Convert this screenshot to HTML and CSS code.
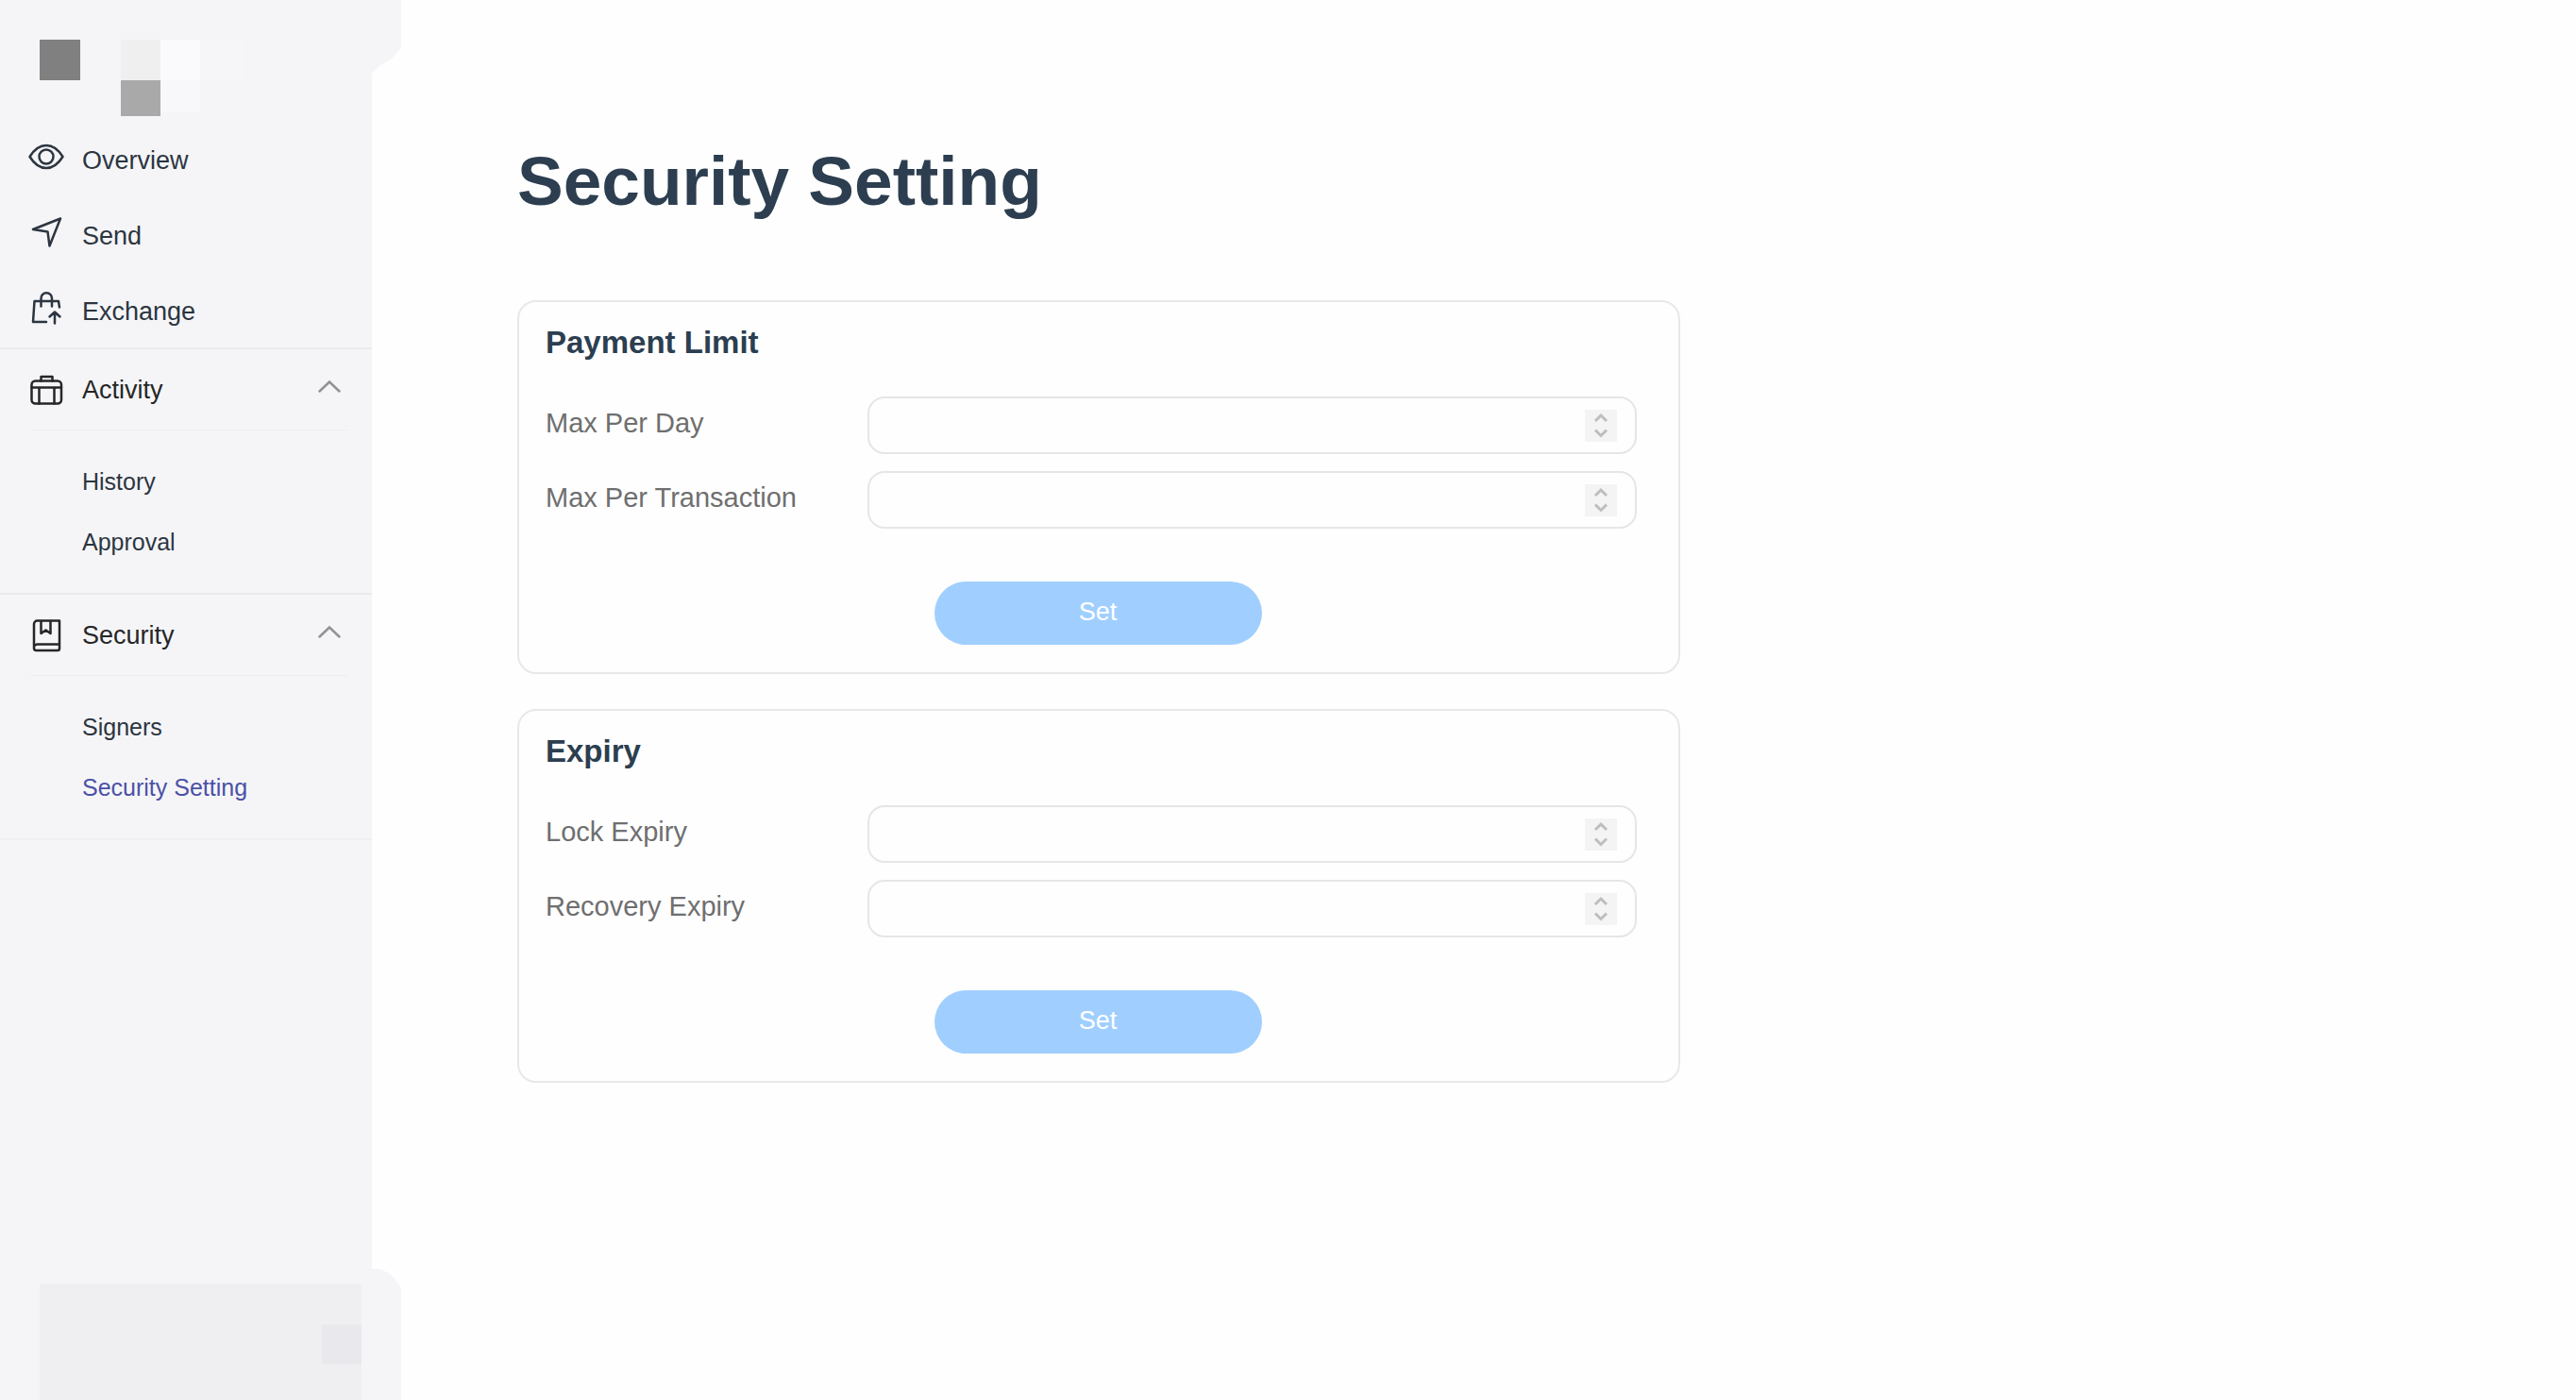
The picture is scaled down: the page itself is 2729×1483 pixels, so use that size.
FILE: index.html
```html
<!DOCTYPE html>
<html lang="en">
<head>
<meta charset="utf-8">
<meta name="viewport" content="width=device-width, initial-scale=1">
<title>Security Setting</title>
<link rel="stylesheet" href="styles.css">
</head>
<body>
<div class="layout">
  <aside class="sidebar">
    <div class="brand">
      <svg class="brand-logo" width="256" height="131" viewBox="0 0 256 131" aria-hidden="true">
        <rect x="42" y="42" width="43" height="43" fill="#808080"/>
        <rect x="128" y="42" width="42" height="43" fill="#efeff0"/>
        <rect x="170" y="42" width="42" height="43" fill="#fafafc"/>
        <rect x="212" y="42" width="44" height="43" fill="#f6f6f8"/>
        <rect x="128" y="85" width="42" height="38" fill="#a9a9aa"/>
        <rect x="170" y="85" width="42" height="34" fill="#f8f8fa"/>
      </svg>
    </div>
    <nav class="nav">
      <ul class="nav-main">
        <li><a class="nav-link" href="#">
          <svg class="icon icon-raised" viewBox="0 0 40 40" aria-hidden="true"><path d="M2.500 20C7.500 12 13.500 8 20 8s12.500 4 17.500 12C32.500 28 26.500 32 20 32S7.500 28 2.500 20z"/><circle cx="20" cy="20" r="7.500"/></svg>
          <span>Overview</span></a></li>
        <li><a class="nav-link" href="#">
          <svg class="icon icon-raised" viewBox="0 0 40 40" aria-hidden="true"><path d="M35 5.500 6 17l15.500 2.500 2 15z"/></svg>
          <span>Send</span></a></li>
        <li><a class="nav-link" href="#">
          <svg class="icon icon-raised" viewBox="0 0 40 40" aria-hidden="true"><path d="M20 35H6L7.500 13H33l1 6.500M14.500 18.500V10a5.750 5.750 0 0 1 11.500 0v8.500M29 36.500V25M23.500 29.500 29 24.500l5.500 5"/></svg>
          <span>Exchange</span></a></li>
      </ul>
      <section class="group">
        <button class="group-toggle" type="button" aria-expanded="true">
          <svg class="icon" viewBox="0 0 40 40" aria-hidden="true"><rect x="4.500" y="10.500" width="31.500" height="24" rx="4"/><path d="M4.500 17.500H36M12.500 17.500v17M28.500 17.500v17M14.500 10.500V6H26.500v4.500"/></svg>
          <span>Activity</span>
          <svg class="chevron" viewBox="0 0 24 14" aria-hidden="true"><path d="M1.500 12.500 12 2.500l10.500 10"/></svg>
        </button>
        <ul class="group-list">
          <li><a class="sub-link" href="#">History</a></li>
          <li><a class="sub-link" href="#">Approval</a></li>
        </ul>
      </section>
      <section class="group">
        <button class="group-toggle" type="button" aria-expanded="true">
          <svg class="icon" viewBox="0 0 40 40" aria-hidden="true"><path d="M7 33.500V8a3.500 3.500 0 0 1 3.500-3.500H34V34a2 2 0 0 1-2 2H9.500A2.500 2.500 0 0 1 7 33.500 3.500 3.500 0 0 1 10.500 29.500H34M14.500 4.500V18l5-3.500 5 3.500V4.500"/></svg>
          <span>Security</span>
          <svg class="chevron" viewBox="0 0 24 14" aria-hidden="true"><path d="M1.500 12.500 12 2.500l10.500 10"/></svg>
        </button>
        <ul class="group-list">
          <li><a class="sub-link" href="#">Signers</a></li>
          <li><a class="sub-link active" href="#" aria-current="page">Security Setting</a></li>
        </ul>
      </section>
    </nav>
    <div class="account">
      <div class="account-panel"><span class="account-badge"></span></div>
    </div>
  </aside>

  <main class="content">
    <h1 class="title">Security Setting</h1>
    <form class="card">
      <h2 class="card-title">Payment Limit</h2>
      <div class="row">
        <label class="label" for="max-day">Max Per Day</label>
        <div class="field"><input class="input" id="max-day" type="number">
          <svg class="spinner" viewBox="0 0 34 34" aria-hidden="true"><path d="M11 12l6-6 6 6M11 21.500l6 6 6-6"/></svg></div>
      </div>
      <div class="row">
        <label class="label" for="max-transaction">Max Per Transaction</label>
        <div class="field"><input class="input" id="max-transaction" type="number">
          <svg class="spinner" viewBox="0 0 34 34" aria-hidden="true"><path d="M11 12l6-6 6 6M11 21.500l6 6 6-6"/></svg></div>
      </div>
      <button class="submit" type="button">Set</button>
    </form>
    <form class="card">
      <h2 class="card-title">Expiry</h2>
      <div class="row">
        <label class="label" for="lock-expiry">Lock Expiry</label>
        <div class="field"><input class="input" id="lock-expiry" type="number">
          <svg class="spinner" viewBox="0 0 34 34" aria-hidden="true"><path d="M11 12l6-6 6 6M11 21.500l6 6 6-6"/></svg></div>
      </div>
      <div class="row">
        <label class="label" for="recovery-expiry">Recovery Expiry</label>
        <div class="field"><input class="input" id="recovery-expiry" type="number">
          <svg class="spinner" viewBox="0 0 34 34" aria-hidden="true"><path d="M11 12l6-6 6 6M11 21.500l6 6 6-6"/></svg></div>
      </div>
      <button class="submit" type="button">Set</button>
    </form>
  </main>
</div>
</body>
</html>
```
FILE: styles.css
```css
* {
  box-sizing: border-box;
}

body {
  margin: 0;
  background: #fefefe;
  color: #2c3e50;
  font-family: "Liberation Sans", Arial, Helvetica, sans-serif;
}

button,
input {
  font-family: inherit;
}

ul {
  list-style: none;
  margin: 0;
  padding: 0;
}

a {
  text-decoration: none;
}

.layout {
  display: grid;
  grid-template-columns: 394px minmax(0, 1fr);
  min-height: 100vh;
}

/* Sidebar */

.sidebar {
  display: flex;
  flex-direction: column;
  background: #f5f5f8;
}

/* The top and bottom parts reach past the sidebar edge. */
.brand,
.account {
  margin-right: -31px;
  background: #f5f5f8;
}

.brand {
  height: 132px;
  clip-path: polygon(0 0, 100% 0, 100% 51px, 415px 62px, 402px 70px, 394px 78px, 394px 100%, 0 100%);
}

.brand-logo {
  display: block;
}

.nav-main {
  display: flex;
  flex-direction: column;
  gap: 4px;
}

.nav-link,
.group-toggle {
  display: flex;
  align-items: center;
  gap: 18px;
  width: 100%;
  padding: 0 33px 0 29px;
  font-size: 27px;
  line-height: 32px;
}

.nav-link {
  height: 76px;
  color: #2c3540;
}

.icon {
  width: 40px;
  height: 40px;
  flex: none;
  fill: none;
  stroke: currentColor;
  stroke-width: 2.5;
  stroke-linecap: round;
  stroke-linejoin: round;
}

.icon-raised {
  margin-bottom: 8px;
}

.group {
  border-top: 2px solid #e9eaec;
}

.group:last-child {
  border-bottom: 2px solid #eeeff1;
}

.group-toggle {
  height: 85px;
  border: 0;
  background: none;
  color: #262626;
}

.chevron {
  width: 24px;
  height: 14px;
  margin: 0 0 8px auto;
  fill: none;
  stroke: #929294;
  stroke-width: 2.5;
  stroke-linecap: round;
}

.group-list {
  margin: 0 26px 0 32px;
  padding: 22px 0 22px 55px;
  border-top: 1px solid #eceef0;
}

.sub-link {
  display: block;
  color: #2c3540;
  font-size: 25px;
  line-height: 64px;
}

.sub-link.active {
  color: #4b51a6;
}

.account {
  display: flex;
  margin-top: auto;
  padding: 16px 42px 0;
  clip-path: polygon(0 0, 402px 0, 413px 5px, 421px 14px, 100% 20px, 100% 100%, 0 100%);
}

.account-panel {
  display: flex;
  flex: 1;
  justify-content: flex-end;
  height: 123px;
  padding-top: 43px;
  background: #efeff1;
}

.account-badge {
  width: 42px;
  height: 42px;
  background: #e9e9ed;
}

/* Content */

.content {
  display: flex;
  flex-direction: column;
  gap: 37px;
  padding: 150px 154px 64px;
}

.title {
  margin: 0 0 47px;
  font-size: 73px;
  line-height: 84px;
}

.card {
  display: flex;
  flex-direction: column;
  max-width: 1232px;
  padding: 23px 44px 29px 28px;
  border: 2px solid #e8e8e8;
  border-radius: 20px;
}

.card-title {
  margin: 0 0 37px;
  font-size: 33px;
  line-height: 40px;
}

.row {
  display: grid;
  grid-template-columns: 341px minmax(0, 1fr);
  align-items: center;
}

.row + .row {
  margin-top: 18px;
}

.label {
  padding-bottom: 6px;
  color: #6f6f6f;
  font-size: 29px;
  line-height: 36px;
}

.field {
  display: flex;
  align-items: center;
  height: 61px;
  padding: 0 19px;
  border: 2px solid #e6e6e6;
  border-radius: 18px;
}

.input {
  flex: 1;
  min-width: 0;
  height: 100%;
  padding: 0;
  border: 0;
  outline: 0;
  background: transparent;
  font-size: 29px;
  appearance: textfield;
}

.input::-webkit-inner-spin-button,
.input::-webkit-outer-spin-button {
  margin: 0;
  appearance: none;
}

.spinner {
  width: 34px;
  height: 34px;
  background: #f4f4f5;
  fill: none;
  stroke: #bebec1;
  stroke-width: 3;
}

.submit {
  align-self: center;
  width: 347px;
  height: 67px;
  margin: 56px 0 0 14px;
  padding: 0 0 2px;
  border: 0;
  border-radius: 34px;
  background: #a0cfff;
  color: #fff;
  font-size: 27px;
}
```
